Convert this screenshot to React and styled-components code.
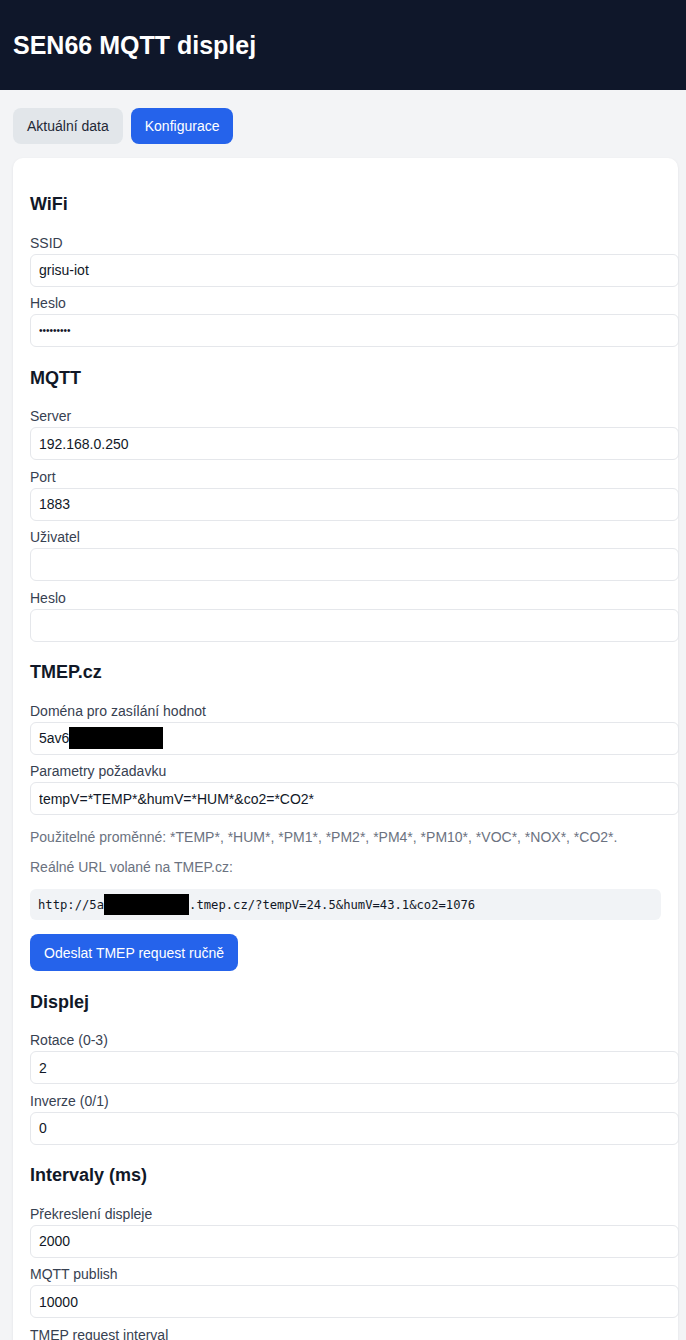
import React from "react";
import styled, { createGlobalStyle } from "styled-components";

const GlobalStyle = createGlobalStyle`
  html, body {
    margin: 0;
    padding: 0;
    background: #f3f4f6;
    font-family: "Liberation Sans", Arial, Helvetica, sans-serif;
    color: #111827;
  }
  * { font-family: inherit; }
`;

const Header = styled.header`
  height: 90px;
  background: #0f172a;
  display: flex;
  align-items: center;
  padding: 0 13px;
`;

const Title = styled.h1`
  margin: 0;
  color: #ffffff;
  font-size: 25px;
  font-weight: 700;
`;

const Main = styled.main`
  padding: 18px 8px 0 13px;
`;

const Tabs = styled.nav`
  display: flex;
  gap: 8px;
  margin-bottom: 14px;
`;

const Tab = styled.button`
  height: 36px;
  padding: 0 14px;
  border: none;
  border-radius: 8px;
  font-size: 14px;
  cursor: pointer;
  background: ${(p) => (p.$active ? "#2563eb" : "#e2e6ea")};
  color: ${(p) => (p.$active ? "#ffffff" : "#1f2937")};
`;

const Card = styled.section`
  background: #ffffff;
  border-radius: 10px;
  box-shadow: 0 1px 3px rgba(15, 23, 42, 0.08);
  padding: 16px 17px 24px;
`;

const SectionTitle = styled.h3`
  margin: 19px 0 19.5px;
  font-size: 18px;
  line-height: 22px;
  font-weight: 700;
  color: #111827;
  &:not(:first-child) {
    margin-top: 19.5px;
  }
`;

const Label = styled.label`
  display: block;
  margin: 8.5px 0 2px;
  font-size: 14px;
  line-height: 17px;
  color: #374151;
`;

const Input = styled.input`
  display: block;
  box-sizing: content-box;
  width: 100%;
  height: 31px;
  margin: 0;
  padding: 0 8px;
  border: 1px solid #e5e7eb;
  border-radius: 6px;
  background: #ffffff;
  font-size: ${(p) => (p.type === "password" ? "10px" : "14px")};
  color: #111827;
  outline: none;
`;

const FakeInput = styled.div`
  display: flex;
  align-items: center;
  box-sizing: content-box;
  width: 100%;
  height: 31px;
  padding: 0 8px;
  border: 1px solid #e5e7eb;
  border-radius: 6px;
  background: #ffffff;
  font-size: 14px;
  color: #111827;
`;

const Redacted = styled.span`
  display: inline-block;
  background: #000000;
  width: ${(p) => p.$w}px;
  height: ${(p) => p.$h}px;
  vertical-align: middle;
`;

const Hint = styled.p`
  margin: ${(p) => p.$top}px 0 0;
  font-size: 14px;
  line-height: 18px;
  color: #6b7280;
`;

const Code = styled.div`
  margin-top: 13px;
  height: 31px;
  display: flex;
  align-items: center;
  padding: 0 8px;
  background: #f1f3f6;
  border-radius: 6px;
  font-family: "DejaVu Sans Mono", "Liberation Mono", monospace;
  font-size: 12.2px;
  color: #111827;
  white-space: nowrap;
`;

const ActionButton = styled.button`
  display: block;
  margin-top: 14px;
  height: 37px;
  padding: 0 14px;
  border: none;
  border-radius: 8px;
  background: #2563eb;
  color: #ffffff;
  font-size: 14px;
  cursor: pointer;
`;

function Field({ label, value, type = "text" }) {
  return (
    <>
      <Label>{label}</Label>
      <Input type={type} defaultValue={value} />
    </>
  );
}

export default function App() {
  return (
    <>
      <GlobalStyle />
      <Header>
        <Title>SEN66 MQTT displej</Title>
      </Header>
      <Main>
        <Tabs>
          <Tab>Aktuální data</Tab>
          <Tab $active>Konfigurace</Tab>
        </Tabs>
        <Card>
          <SectionTitle>WiFi</SectionTitle>
          <Field label="SSID" value="grisu-iot" />
          <Field label="Heslo" value="123456789" type="password" />

          <SectionTitle>MQTT</SectionTitle>
          <Field label="Server" value="192.168.0.250" />
          <Field label="Port" value="1883" />
          <Field label="Uživatel" value="" />
          <Field label="Heslo" value="" />

          <SectionTitle>TMEP.cz</SectionTitle>
          <Label>Doména pro zasílání hodnot</Label>
          <FakeInput>
            5av6
            <Redacted $w={94} $h={22} />
          </FakeInput>
          <Field label="Parametry požadavku" value={'tempV=*TEMP*&humV=*HUM*&co2=*CO2*'} />
          <Hint $top={13}>
            Použitelné proměnné: *TEMP*, *HUM*, *PM1*, *PM2*, *PM4*, *PM10*, *VOC*, *NOX*, *CO2*.
          </Hint>
          <Hint $top={12}>Reálné URL volané na TMEP.cz:</Hint>
          <Code>
            http://5a
            <Redacted $w={85} $h={21} />
            .tmep.cz/?tempV=24.5&amp;humV=43.1&amp;co2=1076
          </Code>
          <ActionButton>Odeslat TMEP request ručně</ActionButton>

          <SectionTitle>Displej</SectionTitle>
          <Field label="Rotace (0-3)" value="2" />
          <Field label="Inverze (0/1)" value="0" />

          <SectionTitle>Intervaly (ms)</SectionTitle>
          <Field label="Překreslení displeje" value="2000" />
          <Field label="MQTT publish" value="10000" />
          <Field label="TMEP request interval" value="60000" />
        </Card>
      </Main>
    </>
  );
}
